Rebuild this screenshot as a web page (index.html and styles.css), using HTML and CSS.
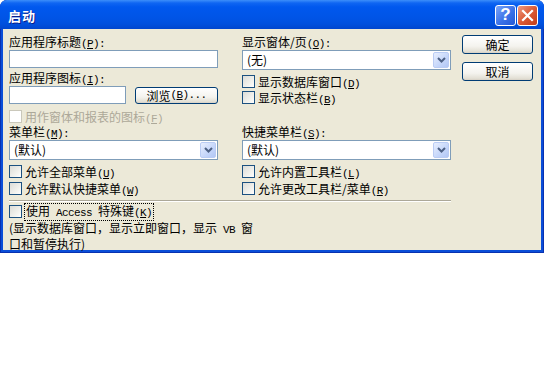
FILE: index.html
```html
<!DOCTYPE html>
<html lang="zh-CN">
<head>
  <meta charset="UTF-8">
  <title>启动</title>
  <link rel="stylesheet" href="styles.css">
</head>
<body>
  <div class="window">
    <div class="titlebar">
      <span class="title">启动</span>
      <div class="title-buttons">
        <span class="btn-help">?</span>
        <span class="btn-close">
          <svg width="13" height="13" viewBox="0 0 13 13"><path d="M2 2 L11 11 M11 2 L2 11" stroke="#fff" stroke-width="2.2" stroke-linecap="square"/></svg>
        </span>
      </div>
    </div>

    <div class="client">
      <div class="form">
        <div class="cols top">
          <div class="col">
            <div class="label">应用程序标题<span class="a">(<u>P</u>):</span></div>
            <div class="textbox"></div>
            <div class="label second">应用程序图标<span class="a">(<u>I</u>):</span></div>
            <div class="browse-row">
              <div class="textbox short"></div>
              <div class="button browse">浏览<span class="a">(<u>B</u>)...</span></div>
            </div>
            <div class="check disabled gap4">
              <span class="box"></span>
              <span>用作窗体和报表的图标<span class="a">(<u>F</u>)</span></span>
            </div>
          </div>
          <div class="col">
            <div class="label">显示窗体/页<span class="a">(<u>O</u>):</span></div>
            <div class="combo">
              <span class="combo-text">(无)</span>
              <span class="combo-arrow"><svg width="9" height="6" viewBox="0 0 9 6"><polyline points="1,1 4.5,4.5 8,1" fill="none" stroke="#4D6185" stroke-width="2"/></svg></span>
            </div>
            <div class="check small first">
              <span class="box"></span>
              <span>显示数据库窗口<span class="a">(<u>D</u>)</span></span>
            </div>
            <div class="check small">
              <span class="box"></span>
              <span>显示状态栏<span class="a">(<u>B</u>)</span></span>
            </div>
          </div>
        </div>

        <div class="cols">
          <div class="col">
            <div class="label">菜单栏<span class="a">(<u>M</u>):</span></div>
            <div class="combo">
              <span class="combo-text">(默认)</span>
              <span class="combo-arrow"><svg width="9" height="6" viewBox="0 0 9 6"><polyline points="1,1 4.5,4.5 8,1" fill="none" stroke="#4D6185" stroke-width="2"/></svg></span>
            </div>
            <div class="check first">
              <span class="box"></span>
              <span>允许全部菜单<span class="a">(<u>U</u>)</span></span>
            </div>
            <div class="check">
              <span class="box"></span>
              <span>允许默认快捷菜单<span class="a">(<u>W</u>)</span></span>
            </div>
          </div>
          <div class="col">
            <div class="label">快捷菜单栏<span class="a">(<u>S</u>):</span></div>
            <div class="combo">
              <span class="combo-text">(默认)</span>
              <span class="combo-arrow"><svg width="9" height="6" viewBox="0 0 9 6"><polyline points="1,1 4.5,4.5 8,1" fill="none" stroke="#4D6185" stroke-width="2"/></svg></span>
            </div>
            <div class="check first">
              <span class="box"></span>
              <span>允许内置工具栏<span class="a">(<u>L</u>)</span></span>
            </div>
            <div class="check">
              <span class="box"></span>
              <span>允许更改工具栏/菜单<span class="a">(<u>R</u>)</span></span>
            </div>
          </div>
        </div>

        <div class="separator"></div>

        <div class="check access">
          <span class="box"></span>
          <span class="focus">使用<span class="a"> Access </span>特殊键<span class="a">(<u>K</u>)</span></span>
        </div>
        <div class="note">(显示数据库窗口，显示立即窗口，显示<span class="a"> VB </span>窗<br>口和暂停执行)</div>
      </div>

      <div class="actions">
        <div class="button action">确定</div>
        <div class="button action">取消</div>
      </div>
    </div>
  </div>
</body>
</html>
```

FILE: styles.css
```css
* {
  box-sizing: border-box;
}

body {
  margin: 0;
  background: #fff;
  font-family: "Noto Sans CJK SC", sans-serif;
  font-size: 12px;
  color: #000;
}

u {
  text-decoration: underline;
}

/* trechos ascii com largura fixa de 6px, como no SimSun */
.a {
  font-family: "Liberation Mono", monospace;
  font-size: 11px;
  letter-spacing: -0.6px;
  white-space: pre;
}

.window {
  width: 544px;
  height: 253px;
  display: flex;
  flex-direction: column;
  border-radius: 7px 7px 0 0;
  overflow: hidden;
  background: #0A4ED8;
  box-shadow: inset 0 0 0 1px #0831B0;
}

.titlebar {
  height: 29px;
  display: flex;
  align-items: center;
  justify-content: space-between;
  padding: 1px 6px 0 8px;
  background: linear-gradient(#3C8EFA 0, #0F66F2 3px, #0058EE 7px, #0054E6 18px, #0050DD 24px, #0046CE 29px);
}

.title {
  color: #fff;
  font-weight: bold;
  font-size: 13px;
  letter-spacing: 1px;
  text-shadow: 1px 1px #0A1E8C;
}

.title-buttons {
  display: flex;
  gap: 1px;
}

.btn-help, .btn-close {
  width: 21px;
  height: 21px;
  border: 1px solid #fff;
  border-radius: 3px;
  display: flex;
  align-items: center;
  justify-content: center;
}

.btn-help {
  background: linear-gradient(135deg, #7BA4F8, #3A72E8 55%, #2358D6);
  color: #fff;
  font-family: "Liberation Sans", sans-serif;
  font-weight: bold;
  font-size: 17px;
}

.btn-close {
  background: linear-gradient(135deg, #EE9C82, #DB5A36 50%, #C23C17);
}

.client {
  flex: 1;
  margin: 0 3px 3px 3px;
  background: #ECE9D8;
  display: flex;
  gap: 11px;
  padding: 5px 8px 0 6px;
}

.form {
  width: 442px;
}

.cols {
  display: grid;
  grid-template-columns: 209px 209px;
  column-gap: 24px;
}

.cols.top {
  height: 90px;
}

.col {
  display: flex;
  flex-direction: column;
}

.label {
  height: 16px;
  line-height: 16px;
  white-space: nowrap;
}

.label.second {
  margin-top: 2px;
}

.textbox {
  height: 18px;
  border: 1px solid #7F9DB9;
  background: #fff;
}

.textbox.short {
  width: 117px;
}

.browse-row {
  display: flex;
  align-items: center;
  gap: 9px;
  height: 18px;
}

.button {
  display: flex;
  align-items: center;
  justify-content: center;
  border: 1px solid #003C74;
  border-radius: 3px;
  background: linear-gradient(#FFFFFF, #F4F3EE 60%, #E3E0D5 90%, #D6D0C5);
  white-space: nowrap;
}

.button.browse {
  width: 83px;
  height: 17px;
}

.combo {
  height: 20px;
  border: 1px solid #7F9DB9;
  background: #fff;
  padding: 1px;
  display: flex;
}

.combo-text {
  flex: 1;
  padding-left: 3px;
  line-height: 16px;
}

.combo-arrow {
  width: 16px;
  height: 16px;
  border: 1px solid #BACCF4;
  border-radius: 2px;
  background: linear-gradient(135deg, #E8EFFE, #C5D6FA 60%, #B2C7F5);
  display: flex;
  align-items: center;
  justify-content: center;
}

.check {
  display: flex;
  align-items: center;
  gap: 3px;
  height: 17px;
  white-space: nowrap;
}

.check.small {
  height: 16px;
}

.check.first {
  margin-top: 3px;
}

.check.gap4 {
  margin-top: 4px;
  height: 16px;
}

.box {
  width: 13px;
  height: 13px;
  border: 1px solid #1C5180;
  background: linear-gradient(135deg, #DCDCD7, #F4F4F0 70%, #FFFFFF);
  flex-shrink: 0;
}

.check.disabled {
  color: #ACA899;
}

.check.disabled .box {
  border-color: #CAC8BB;
  background: #fff;
}

.separator {
  margin-top: 3px;
  height: 2px;
  border-top: 1px solid #ACA899;
  border-bottom: 1px solid #fff;
}

.check.access {
  margin-top: 1px;
}

.focus {
  outline: 1px dotted #000;
  padding: 0 1px;
  line-height: 13px;
}

.note {
  margin-top: 1px;
  line-height: 13px;
  white-space: nowrap;
}

.actions {
  width: 71px;
  padding-top: 1px;
  display: flex;
  flex-direction: column;
  gap: 8px;
}

.button.action {
  height: 19px;
}
```
